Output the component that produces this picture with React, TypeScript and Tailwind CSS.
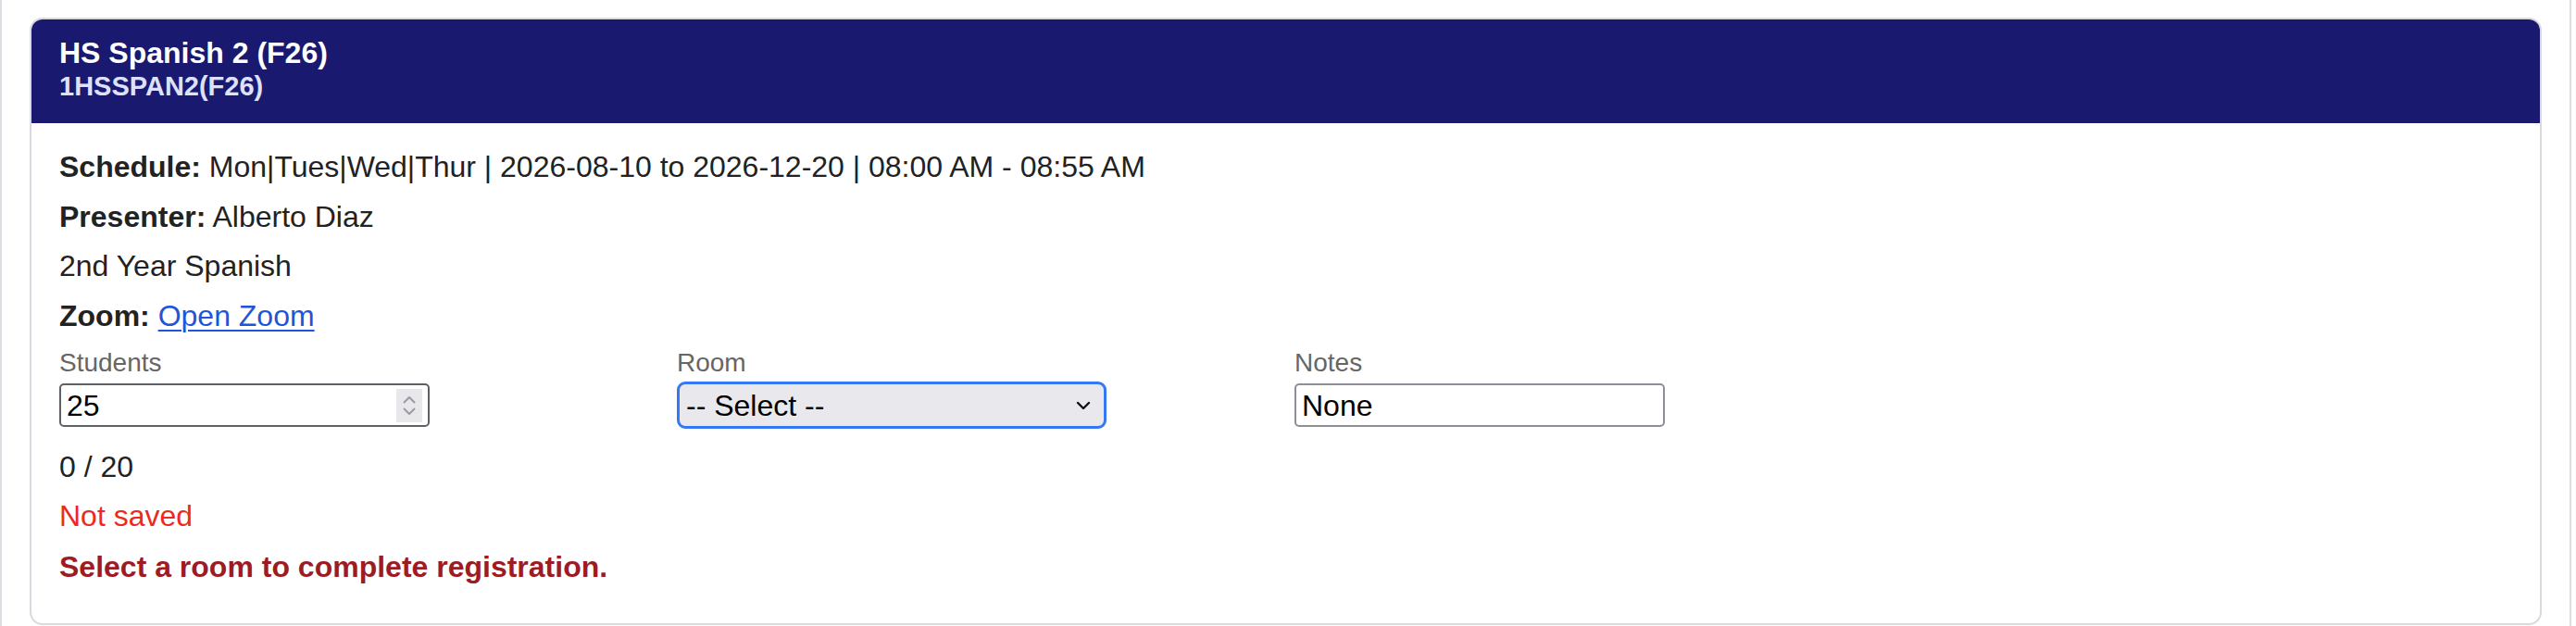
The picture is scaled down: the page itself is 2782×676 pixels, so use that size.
import React from "react";

export default function App() {
  return (
    <div className="w-[2777px] h-[676px] border-x-2 border-[#dcdce2] bg-white pt-[19px] px-[30px] font-['Liberation_Sans',Arial,sans-serif]">
      <div className="border-2 border-[#d9d9df] rounded-[14px] overflow-hidden bg-white">
        <div className="bg-[#191970] px-[30px] pt-[17px] pb-[22px]">
          <div className="text-[32px] leading-[38px] font-bold text-white">HS Spanish 2 (F26)</div>
          <div className="text-[29px] leading-[35px] font-bold text-[#dfe1fa]">1HSSPAN2(F26)</div>
        </div>
        <div className="px-[30px] pt-[21px] pb-[34px] text-[32px] text-[#222222]">
          <div className="leading-[53.5px]">
            <span className="font-bold">Schedule:</span> Mon|Tues|Wed|Thur | 2026-08-10 to 2026-12-20 | 08:00 AM - 08:55 AM
          </div>
          <div className="leading-[53.5px]">
            <span className="font-bold">Presenter:</span> Alberto Diaz
          </div>
          <div className="leading-[53.5px]">2nd Year Spanish</div>
          <div className="leading-[53.5px]">
            <span className="font-bold">Zoom:</span>{" "}
            <a href="#" className="text-[#1f55d6] underline decoration-2 underline-offset-[4px]">Open Zoom</a>
          </div>
          <div className="grid grid-cols-[667px_667px_667px] pt-[6px]">
            <div className="flex flex-col">
              <div className="text-[28px] leading-[36px] text-[#666666] mb-[4px]">Students</div>
              <div className="w-[400px] h-[47px] border-2 border-[#5f5f66] rounded-[5px] flex items-center pl-[6px] pr-[6px] bg-white">
                <span className="flex-1 text-[32px] leading-none text-black">25</span>
                <div className="w-[28px] h-[36px] bg-[#e8e8ec] flex flex-col items-center justify-center gap-[4px]">
                  <svg width="14" height="9" viewBox="0 0 14 9" fill="none">
                    <path d="M1.5 7.5L7 2l5.5 5.5" stroke="#9a9aa3" strokeWidth="2" strokeLinecap="round" strokeLinejoin="round" />
                  </svg>
                  <svg width="14" height="9" viewBox="0 0 14 9" fill="none">
                    <path d="M1.5 1.5L7 7l5.5-5.5" stroke="#9a9aa3" strokeWidth="2" strokeLinecap="round" strokeLinejoin="round" />
                  </svg>
                </div>
              </div>
            </div>
            <div className="flex flex-col">
              <div className="text-[28px] leading-[36px] text-[#666666] mb-[2px]">Room</div>
              <div className="w-[464px] h-[51px] border-[3px] border-[#3478f6] rounded-[9px] bg-[#e9e8ed] flex items-center pl-[7px] pr-[14px]">
                <span className="flex-1 text-[32px] leading-none text-black">-- Select --</span>
                <svg width="16" height="10" viewBox="0 0 16 10" fill="none">
                  <path d="M2 2l6 6 6-6" stroke="#111" strokeWidth="2.4" strokeLinecap="round" strokeLinejoin="round" />
                </svg>
              </div>
            </div>
            <div className="flex flex-col">
              <div className="text-[28px] leading-[36px] text-[#666666] mb-[4px]">Notes</div>
              <div className="w-[400px] h-[47px] border-2 border-[#8e8e99] rounded-[5px] flex items-center pl-[6px] bg-white">
                <span className="text-[32px] leading-none text-black">None</span>
              </div>
            </div>
          </div>
          <div className="leading-[53px] mt-[15px]">0 / 20</div>
          <div className="leading-[53px] text-[#ec2a1f]">Not saved</div>
          <div className="leading-[53px] mt-[2px] font-bold text-[#9e1b23]">Select a room to complete registration.</div>
        </div>
      </div>
    </div>
  );
}
